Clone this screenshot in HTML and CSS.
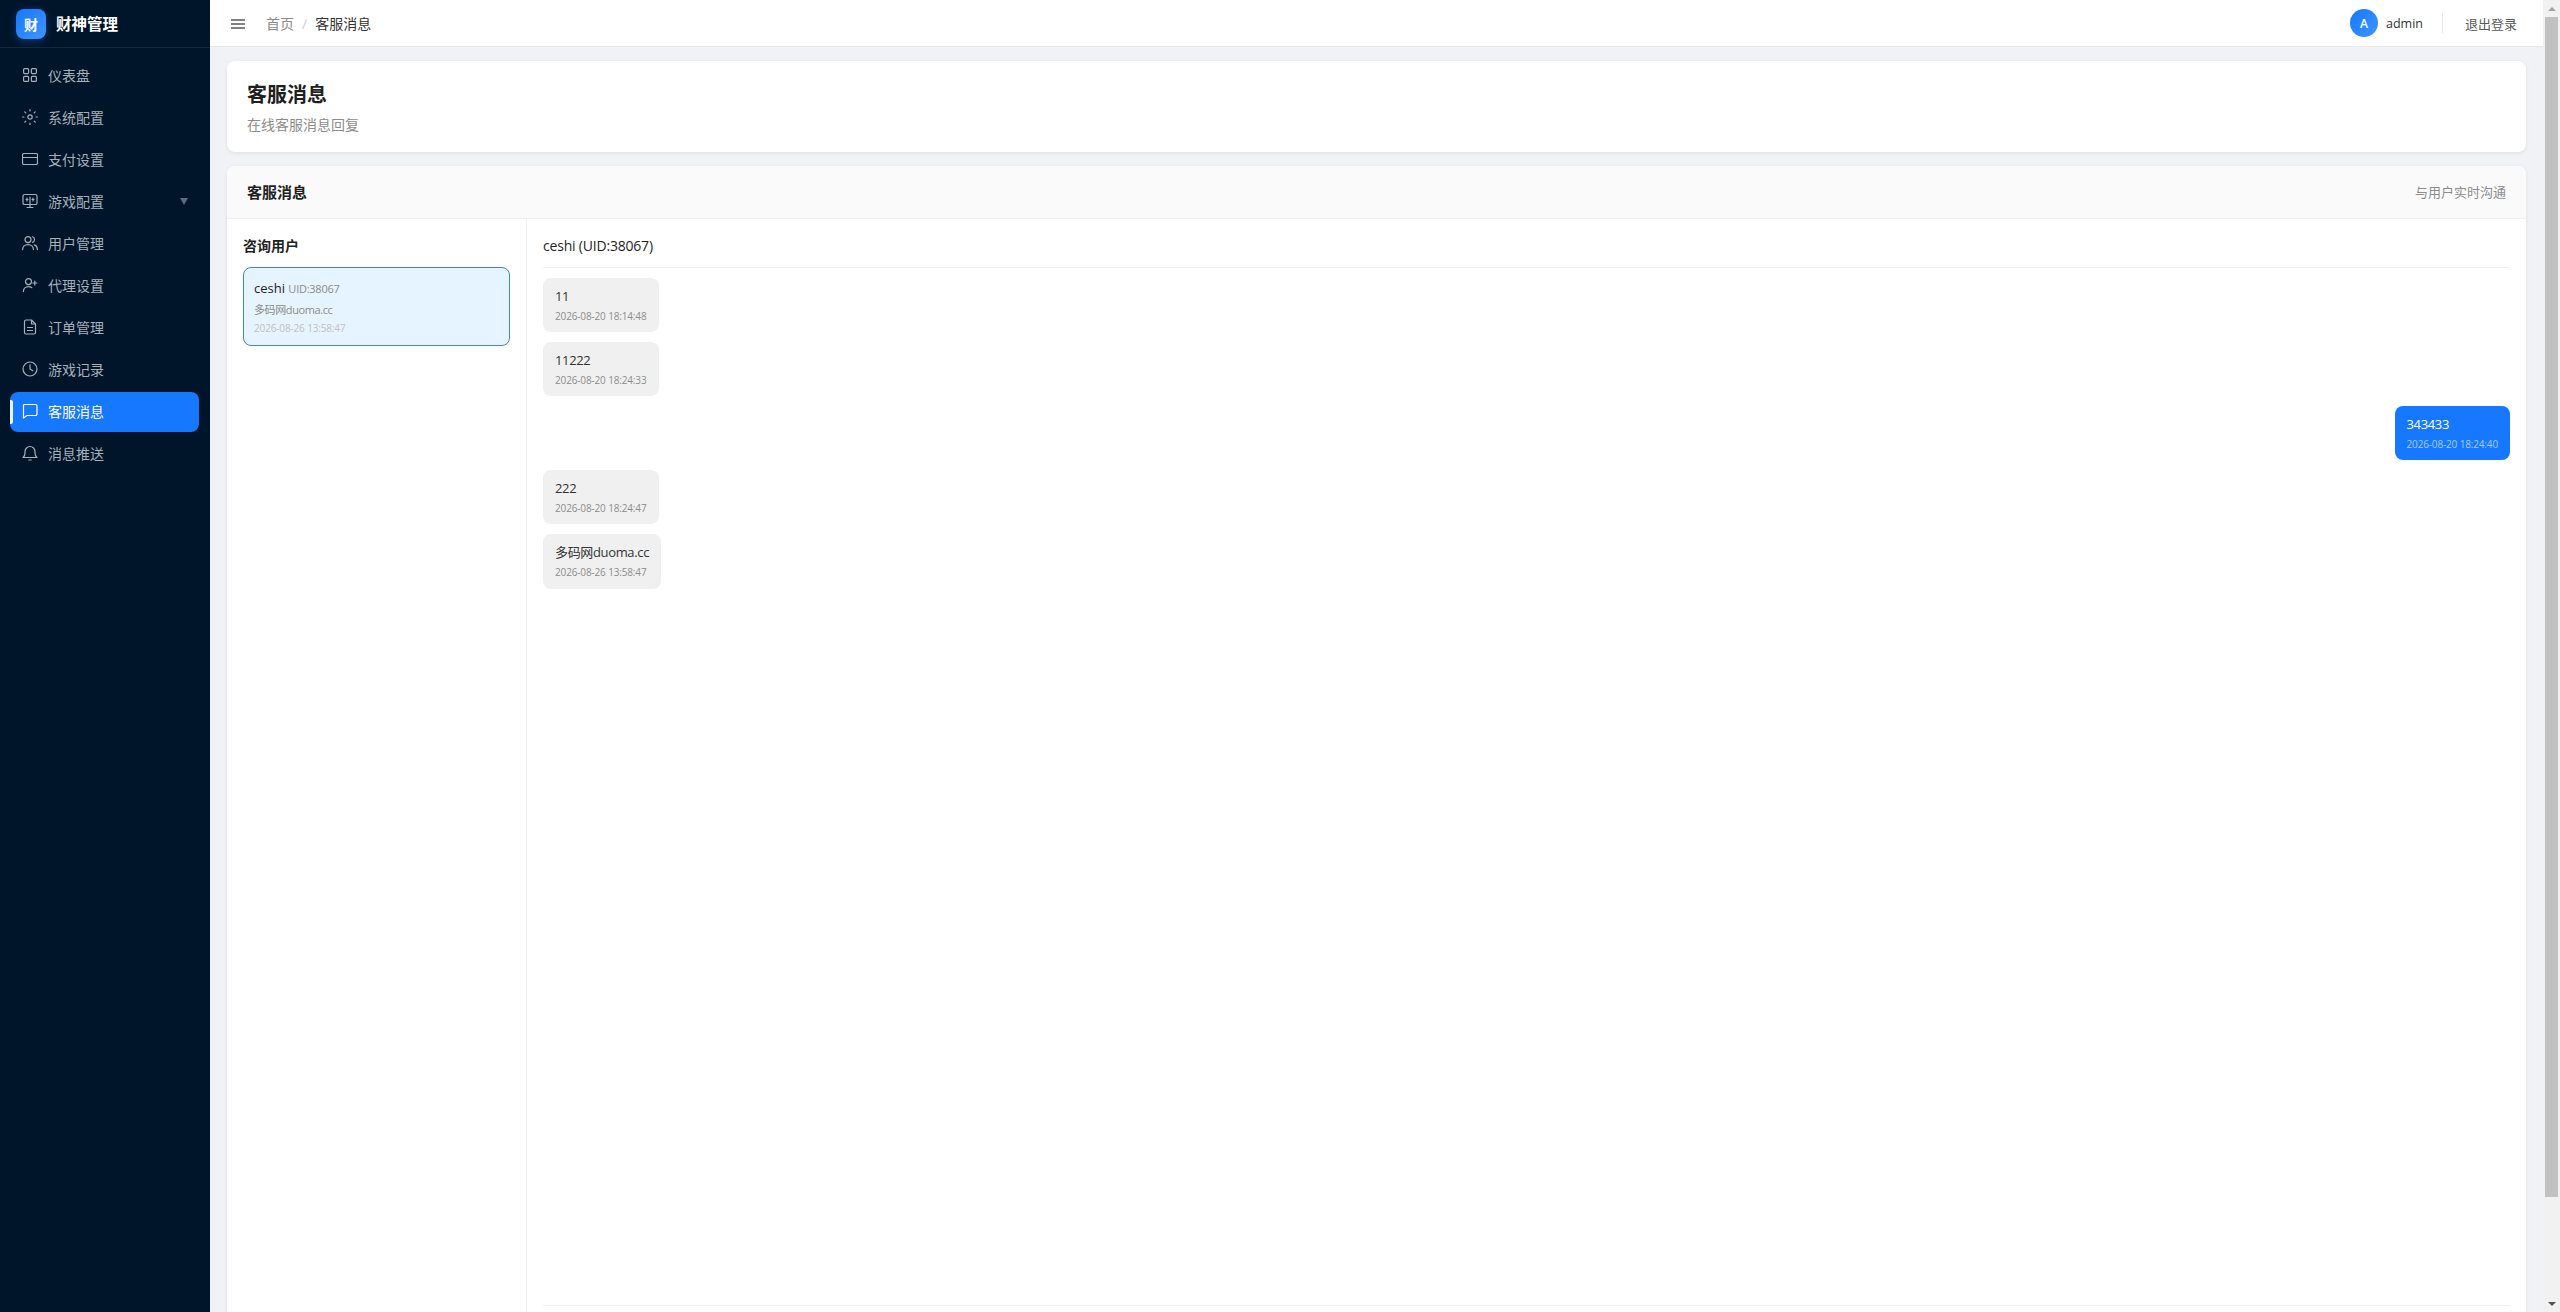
FILE: index.html
```html
<!DOCTYPE html>
<html lang="zh-CN">
<head>
<meta charset="utf-8">
<title>客服消息</title>
<link rel="stylesheet" href="styles.css">
</head>
<body>
<div class="app">
  <aside class="sidebar">
    <div class="brand"><span class="logo">财</span><span class="brand-name">财神管理</span></div>
    <nav class="nav">
      <a class="nav-item"><svg class="ico" viewBox="0 0 16 16"><rect x="1.6" y="1.6" width="5" height="5" rx="1"/><rect x="9.4" y="1.6" width="5" height="5" rx="1"/><rect x="1.6" y="9.4" width="5" height="5" rx="1"/><rect x="9.4" y="9.4" width="5" height="5" rx="1"/></svg>仪表盘</a>
      <a class="nav-item"><svg class="ico" viewBox="0 0 16 16"><circle cx="8" cy="8" r="2.2"/><path d="M8 .6v1.4M8 14v1.4M.6 8H2M14 8h1.4M2.8 2.8l1 1M12.2 12.2l1 1M2.8 13.2l1-1M12.2 3.8l1-1"/></svg>系统配置</a>
      <a class="nav-item"><svg class="ico" viewBox="0 0 16 16"><rect x=".5" y="2.5" width="15" height="11" rx="1.6"/><path d="M.5 6.500h15"/></svg>支付设置</a>
      <a class="nav-item"><svg class="ico" viewBox="0 0 16 16"><rect x="1" y="1.5" width="14" height="10" rx="1.6"/><path d="M8 4v10M5 14.5h6M5 5v3M11 5v3M4 6.500h2M10 6.500h2"/></svg>游戏配置<span class="caret"></span></a>
      <a class="nav-item"><svg class="ico" viewBox="0 0 16 16"><circle cx="6" cy="4.6" r="3"/><path d="M.6 14.6c0-3 2.300-5 5.400-5s5.400 2 5.400 5M10.600 1.800a3 3 0 0 1 0 5.600M12.400 9.900c1.800.7 3 2.400 3 4.700"/></svg>用户管理</a>
      <a class="nav-item"><svg class="ico" viewBox="0 0 16 16"><circle cx="6.500" cy="4.600" r="3"/><path d="M1.400 14.600c0-3 2.200-5 5.100-5 1.300 0 2.500.4 3.400 1.100M12.800 4v4M10.800 6h4"/></svg>代理设置</a>
      <a class="nav-item"><svg class="ico" viewBox="0 0 16 16"><path d="M9.500 1H4a1.500 1.500 0 0 0-1.500 1.500v11A1.500 1.500 0 0 0 4 15h8a1.500 1.500 0 0 0 1.500-1.500V5zM9.500 1v4h4M5.500 8.500h5M5.500 11.500h5"/></svg>订单管理</a>
      <a class="nav-item"><svg class="ico" viewBox="0 0 16 16"><circle cx="8" cy="8" r="7"/><path d="M8 3.800V8l2.800 1.800"/></svg>游戏记录</a>
      <a class="nav-item active"><svg class="ico" viewBox="0 0 16 16"><path d="M2.500 1.500h11A1.500 1.500 0 0 1 15 3v8a1.500 1.500 0 0 1-1.500 1.500H5L1.500 15V2.500a1 1 0 0 1 1-1z"/></svg>客服消息</a>
      <a class="nav-item"><svg class="ico" viewBox="0 0 16 16"><path d="M1 12.500h14c-1.500-1-2-2.300-2-4.500V6.500a5 5 0 0 0-10 0V8c0 2.200-.5 3.500-2 4.500zM6.800 15h2.400"/></svg>消息推送</a>
    </nav>
  </aside>
  <div class="column">
    <header class="topbar">
      <svg class="burger" viewBox="0 0 14 10"><path d="M0 1h14M0 5h14M0 9h14"/></svg>
      <div class="crumbs"><span class="crumb">首页</span><span class="sep">/</span><span class="crumb-now">客服消息</span></div>
      <div class="user">
        <span class="avatar">A</span>
        <span class="uname">admin</span>
        <span class="vline"></span>
        <span class="logout">退出登录</span>
      </div>
    </header>
    <main class="main">
      <section class="card page-head">
        <h1 class="page-title">客服消息</h1>
        <p class="page-sub">在线客服消息回复</p>
      </section>
      <section class="card chat-card">
        <div class="card-head"><h2 class="card-title">客服消息</h2><span class="card-note">与用户实时沟通</span></div>
        <div class="chat-body">
          <div class="users">
            <h3 class="users-title">咨询用户</h3>
            <div class="user-card">
              <div class="uc-name">ceshi <span class="uc-uid">UID:38067</span></div>
              <div class="uc-last">多码网duoma.cc</div>
              <div class="uc-time">2026-08-26 13:58:47</div>
            </div>
          </div>
          <div class="chat">
            <div class="chat-title">ceshi (UID:38067)</div>
            <div class="messages">
              <div class="bubble"><div class="b-text">11</div><div class="b-time">2026-08-20 18:14:48</div></div>
              <div class="bubble"><div class="b-text">11222</div><div class="b-time">2026-08-20 18:24:33</div></div>
              <div class="bubble mine"><div class="b-text">343433</div><div class="b-time">2026-08-20 18:24:40</div></div>
              <div class="bubble"><div class="b-text">222</div><div class="b-time">2026-08-20 18:24:47</div></div>
              <div class="bubble tall"><div class="b-text">多码网duoma.cc</div><div class="b-time">2026-08-26 13:58:47</div></div>
            </div>
            <div class="composer"></div>
          </div>
        </div>
      </section>
    </main>
  </div>
  <div class="scrollbar">
    <span class="sb-arrow up"></span>
    <span class="sb-thumb"></span>
    <span class="sb-arrow down"></span>
  </div>
</div>
</body>
</html>
```

FILE: styles.css
```css
* { box-sizing: border-box; }
html, body { margin: 0; height: 100%; overflow: hidden; }
body {
  font-family: "Open Sans", "Noto Sans CJK SC", sans-serif;
  font-size: 14px;
  color: #1f1f1f;
  background: #f0f2f5;
}
.app { display: flex; height: 1312px; }

.sidebar { width: 210px; flex: none; background: #001529; color: #a6b0bb; }
.brand {
  height: 48px;
  display: flex;
  align-items: center;
  gap: 10px;
  padding: 0 16px;
  border-bottom: 1px solid #12283c;
}
.logo {
  width: 30px;
  height: 30px;
  border-radius: 8px;
  display: flex;
  align-items: center;
  justify-content: center;
  background: linear-gradient(135deg, #1677ff, #4096ff);
  box-shadow: 0 2px 8px rgba(22, 119, 255, .35);
  color: #fff;
  font-size: 14px;
  font-weight: 700;
}
.brand-name { color: #fff; font-size: 15.5px; font-weight: 700; }
.nav { display: flex; flex-direction: column; gap: 2px; padding: 8px 11px 8px 10px; }
.nav-item {
  position: relative;
  height: 40px;
  display: flex;
  align-items: center;
  gap: 10px;
  padding: 0 0 2px 12px;
  border-radius: 8px;
  color: #a6b0bb;
  font-size: 14px;
}
.ico { width: 16px; height: 16px; flex: none; fill: none; stroke: currentColor; stroke-width: 1.2; stroke-linecap: round; stroke-linejoin: round; }
.caret {
  margin-left: auto;
  margin-right: 11px;
  width: 0;
  height: 0;
  border-left: 4px solid transparent;
  border-right: 4px solid transparent;
  border-top: 7px solid #5b6b7b;
}
.nav-item.active { background: #1677ff; color: #fff; }
.nav-item.active::before {
  content: "";
  position: absolute;
  left: 0;
  top: 8px;
  bottom: 8px;
  width: 3px;
  border-radius: 0 2px 2px 0;
  background: #e6f4ff;
}

.column { flex: 1; min-width: 0; display: flex; flex-direction: column; }
.topbar {
  height: 47px;
  flex: none;
  display: flex;
  align-items: center;
  padding: 0 26px 0 21px;
  background: #fff;
  border-bottom: 1px solid #e8e8e8;
}
.burger { width: 14px; height: 10px; margin-top: 1px; fill: none; stroke: #595959; stroke-width: 1.6; }
.crumbs { display: flex; align-items: center; margin-left: 21px; font-size: 14px; }
.crumb { color: #8c8c8c; }
.sep { color: #d0d0d0; margin: 0 8px; }
.crumb-now { color: #333; }
.user { margin-left: auto; display: flex; align-items: center; font-size: 13px; }
.avatar {
  width: 28px;
  height: 28px;
  border-radius: 50%;
  display: flex;
  align-items: center;
  justify-content: center;
  background: linear-gradient(135deg, #1677ff, #4096ff);
  color: #fff;
  font-size: 12px;
  font-weight: 600;
}
.uname { margin-left: 8px; color: #333; font-size: 12.5px; }
.vline { width: 1px; height: 20px; background: #e8e8e8; margin: 0 22px 0 19px; }
.logout { color: #595959; }

.main { flex: 1; min-height: 0; overflow: hidden; padding: 14px 17px; display: flex; flex-direction: column; gap: 14px; }
.card { flex: none; background: #fff; border-radius: 8px; box-shadow: 0 1px 4px rgba(0, 0, 0, .08); }
.page-head { height: 91px; padding: 20px 20px; }
.page-title { margin: 0; font-size: 20px; line-height: 28px; font-weight: 700; color: #1f1f1f; }
.page-sub { margin: 6px 0 0; font-size: 14px; line-height: 20px; color: #8c8c8c; }

.card-head {
  height: 53px;
  display: flex;
  align-items: center;
  justify-content: space-between;
  padding: 0 20px 1px;
  background: #fafafa;
  border-bottom: 1px solid #f0f0f0;
  border-radius: 8px 8px 0 0;
}
.card-title { margin: 0; font-size: 15px; font-weight: 700; color: #1f1f1f; }
.card-note { font-size: 13px; color: #8c8c8c; }
.chat-body { display: flex; }
.users { width: 300px; flex: none; padding: 16px; border-right: 1px solid #f0f0f0; }
.users-title { margin: 0 0 10px; font-size: 14px; line-height: 22px; font-weight: 700; color: #1f1f1f; }
.user-card {
  height: 79px;
  padding: 10px;
  background: #e6f4ff;
  border: 1px solid #3f8bb5;
  border-radius: 8px;
}
.uc-name { font-size: 13px; line-height: 20px; font-weight: 500; color: #1f1f1f; }
.uc-uid { font-size: 11px; font-weight: 400; letter-spacing: -.25px; color: #8c8c8c; }
.uc-last { margin-top: 2px; font-size: 11px; line-height: 18px; letter-spacing: -.4px; color: #8c8c8c; }
.uc-time { margin-top: 1px; font-size: 10px; line-height: 16px; letter-spacing: -.15px; color: #bfbfbf; }

.chat { flex: 1; min-width: 0; padding: 16px 16px 0; }
.chat-title {
  height: 33px;
  line-height: 22px;
  font-size: 14px;
  font-weight: 500;
  letter-spacing: -.2px;
  color: #1f1f1f;
  border-bottom: 1px solid #f0f0f0;
}
.messages { height: 1037px; padding-top: 10px; display: flex; flex-direction: column; gap: 10px; align-items: flex-start; }
.bubble { padding: 8px 12px 0; border-radius: 8px; background: #f0f0f0; color: #333; height: 54px; }
.bubble.tall { height: 55px; }
.bubble.mine { align-self: flex-end; background: #1677ff; color: #fff; }
.b-text { font-size: 13px; line-height: 20px; letter-spacing: -.35px; }
.b-time { margin-top: 3px; font-size: 10px; line-height: 14px; letter-spacing: -.15px; color: #8c8c8c; }
.mine .b-time { color: #a9cdff; }
.composer { height: 80px; border-top: 1px solid #f0f0f0; }

.scrollbar { width: 17px; flex: none; display: flex; flex-direction: column; background: #f1f1f1; }
.sb-arrow { height: 17px; flex: none; display: flex; align-items: center; justify-content: center; }
.sb-arrow::before { content: ""; width: 0; height: 0; border-left: 4px solid transparent; border-right: 4px solid transparent; }
.sb-arrow.up::before { border-bottom: 4px solid #a3a3a3; }
.sb-arrow.down::before { border-top: 4px solid #505050; }
.sb-thumb { margin: 0 2px; height: 1180px; background: #c1c1c1; }
.sb-arrow.down { margin-top: auto; }
```
